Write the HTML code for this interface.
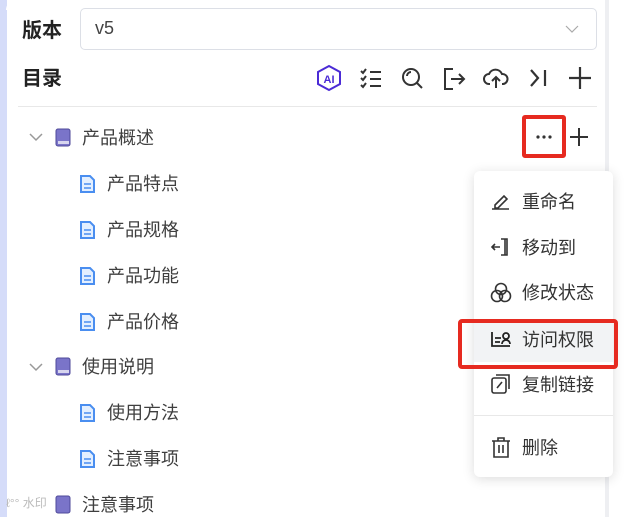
<!DOCTYPE html>
<html><head><meta charset="utf-8"><style>
*{margin:0;padding:0;box-sizing:border-box}
body{width:630px;height:517px;overflow:hidden;background:#fff;font-family:"Liberation Sans","Noto Sans CJK SC",sans-serif;color:#333;position:relative}
.a{position:absolute}
.t{font-size:18px;line-height:24px;color:#3f3f3f;margin-top:1px}
svg{position:absolute;overflow:visible}
.mi{font-size:18px;color:#333;position:absolute;left:522px;line-height:24px}
</style></head><body>
<div class="a" style="left:0;top:0;width:7px;height:517px;background:#d5dcf9"></div>
<div class="a" style="left:6px;top:0;width:10px;height:10px;background:#fff;border-top-left-radius:10px"></div>
<div class="a" style="left:605px;top:0;width:4px;height:517px;background:#eeeff2"></div>

<div class="a" style="left:22px;top:17px;font-size:20px;font-weight:bold;color:#222;line-height:28px">版本</div>
<div class="a" style="left:80px;top:8px;width:517px;height:42px;border:1px solid #dcdfe6;border-radius:5px"></div>
<div class="a" style="left:95px;top:18px;font-size:18px;color:#444">v5</div>
<svg style="left:565px;top:25px" width="14" height="8"><path d="M1 1 L7 7 L13 1" fill="none" stroke="#aaa" stroke-width="1.2"/></svg>

<div class="a" style="left:22px;top:65px;font-size:20px;font-weight:bold;color:#222;line-height:28px">目录</div>
<svg style="left:316px;top:65px" width="26" height="26"><path d="M13 1 L24 7 L24 19 L13 25 L2 19 L2 7 Z" fill="none" stroke="#4b2bd6" stroke-width="2"/><text x="13" y="18" font-size="11" font-weight="bold" text-anchor="middle" fill="#4b2bd6" font-family="Liberation Sans">AI</text></svg>
<svg style="left:360px;top:68px" width="22" height="20" fill="none" stroke="#333" stroke-width="2"><path d="M1 3l2 2 3-4M1 10l2 2 3-4M1 17l2 2 3-4M10 4h11M10 11h11M10 18h11"/></svg>
<svg style="left:401px;top:67px" width="24" height="24" fill="none" stroke="#333" stroke-width="2"><circle cx="10" cy="10" r="8"/><path d="M16 16l5 5M6 9a4 4 0 0 1 4-4"/></svg>
<svg style="left:443px;top:67px" width="24" height="24" fill="none" stroke="#333" stroke-width="2"><path d="M10 2H2v20h8M8 12h13M16 7l5 5-5 5"/></svg>
<svg style="left:483px;top:66px" width="26" height="24" fill="none" stroke="#333" stroke-width="2"><path d="M7 18H6a5 5 0 0 1 0-10 7 7 0 0 1 13 0 5 5 0 0 1 1 10h-1M13 22V11M9 15l4-4 4 4"/></svg>
<svg style="left:529px;top:68px" width="20" height="20" fill="none" stroke="#333" stroke-width="2.2"><path d="M2 2l7 8-7 8M16 2v16"/></svg>
<svg style="left:569px;top:67px" width="22" height="22" fill="none" stroke="#333" stroke-width="2.2"><path d="M11 0v22M0 11h22"/></svg>

<div class="a" style="left:18px;top:106px;width:579px;height:1px;background:#e8e8e8"></div>

<svg style="left:29px;top:133px" width="14" height="8"><path d="M1 1l6 6 6-6" fill="none" stroke="#999" stroke-width="1.5"/></svg>
<svg style="left:55px;top:128px" width="16" height="19"><rect x="1" y="1" width="14" height="17" rx="2" fill="#7a74c9" stroke="#4f4a9a"/><rect x="3" y="13" width="11" height="3" fill="#fff" opacity=".7"/></svg>
<div class="a t" style="left:82px;top:125px">产品概述</div>
<div class="a" style="left:522px;top:115px;width:44px;height:43px;border:4px solid #e62a20;border-radius:3px"></div>
<svg style="left:536px;top:135px" width="16" height="4" fill="#333"><circle cx="2" cy="2" r="1.6"/><circle cx="8" cy="2" r="1.6"/><circle cx="14" cy="2" r="1.6"/></svg>
<svg style="left:570px;top:128px" width="18" height="18" fill="none" stroke="#333" stroke-width="2"><path d="M9 0v18M0 9h18"/></svg>

<svg style="left:80px;top:175px" width="15" height="18"><path d="M1 1h9l4 4v12H1z" fill="#e3efff" stroke="#4a8ef0" stroke-width="2"/><path d="M4 9h7M4 13h7" stroke="#4a8ef0" stroke-width="1.6"/></svg>
<div class="a t" style="left:107px;top:171px">产品特点</div>
<svg style="left:80px;top:221px" width="15" height="18"><path d="M1 1h9l4 4v12H1z" fill="#e3efff" stroke="#4a8ef0" stroke-width="2"/><path d="M4 9h7M4 13h7" stroke="#4a8ef0" stroke-width="1.6"/></svg>
<div class="a t" style="left:107px;top:217px">产品规格</div>
<svg style="left:80px;top:267px" width="15" height="18"><path d="M1 1h9l4 4v12H1z" fill="#e3efff" stroke="#4a8ef0" stroke-width="2"/><path d="M4 9h7M4 13h7" stroke="#4a8ef0" stroke-width="1.6"/></svg>
<div class="a t" style="left:107px;top:263px">产品功能</div>
<svg style="left:80px;top:313px" width="15" height="18"><path d="M1 1h9l4 4v12H1z" fill="#e3efff" stroke="#4a8ef0" stroke-width="2"/><path d="M4 9h7M4 13h7" stroke="#4a8ef0" stroke-width="1.6"/></svg>
<div class="a t" style="left:107px;top:309px">产品价格</div>

<svg style="left:29px;top:363px" width="14" height="8"><path d="M1 1l6 6 6-6" fill="none" stroke="#999" stroke-width="1.5"/></svg>
<svg style="left:55px;top:357px" width="16" height="19"><rect x="1" y="1" width="14" height="17" rx="2" fill="#7a74c9" stroke="#4f4a9a"/><rect x="3" y="13" width="11" height="3" fill="#fff" opacity=".7"/></svg>
<div class="a t" style="left:82px;top:354px">使用说明</div>
<svg style="left:80px;top:404px" width="15" height="18"><path d="M1 1h9l4 4v12H1z" fill="#e3efff" stroke="#4a8ef0" stroke-width="2"/><path d="M4 9h7M4 13h7" stroke="#4a8ef0" stroke-width="1.6"/></svg>
<div class="a t" style="left:107px;top:400px">使用方法</div>
<svg style="left:80px;top:450px" width="15" height="18"><path d="M1 1h9l4 4v12H1z" fill="#e3efff" stroke="#4a8ef0" stroke-width="2"/><path d="M4 9h7M4 13h7" stroke="#4a8ef0" stroke-width="1.6"/></svg>
<div class="a t" style="left:107px;top:446px">注意事项</div>
<svg style="left:55px;top:495px" width="16" height="19"><rect x="1" y="1" width="14" height="17" rx="2" fill="#7a74c9" stroke="#4f4a9a"/></svg>
<div class="a" style="left:6px;top:494px;font-size:12px;color:#bbb">ℓ°° 水印</div>
<div class="a t" style="left:82px;top:492px">注意事项</div>

<div class="a" style="left:474px;top:171px;width:139px;height:306px;background:#fff;border-radius:6px;box-shadow:0 2px 12px rgba(0,0,0,.14)"></div>
<div class="a" style="left:474px;top:322px;width:139px;height:40px;background:#f2f3f5"></div>
<div class="a" style="left:474px;top:415px;width:139px;height:1px;background:#e8e8e8"></div>
<svg style="left:491px;top:192px" width="20" height="18" fill="none" stroke="#333" stroke-width="1.6"><path d="M4 13l9-9 3 3-9 9H4z M1 17h17"/></svg>
<div class="mi" style="top:190px">重命名</div>
<svg style="left:491px;top:237px" width="20" height="20" fill="none" stroke="#333" stroke-width="1.6"><path d="M10 2h6v16h-6M14 2v16M9 10H1M4 7l-3 3 3 3"/></svg>
<div class="mi" style="top:236px">移动到</div>
<svg style="left:490px;top:282px" width="22" height="21" fill="none" stroke="#333" stroke-width="1.6"><circle cx="11" cy="7" r="5.5"/><circle cx="7" cy="14" r="5.5"/><circle cx="15" cy="14" r="5.5"/></svg>
<div class="mi" style="top:281px">修改状态</div>
<svg style="left:490px;top:331px" width="22" height="17" fill="none" stroke="#222" stroke-width="1.8"><path d="M2 1v14h18M5 7h6M5 11h5"/><circle cx="16" cy="5" r="3"/><path d="M12 13a4 4 0 0 1 8 0"/></svg>
<div class="mi" style="top:328px">访问权限</div>
<div class="a" style="left:458px;top:319px;width:160px;height:50px;border:4px solid #e62a20;border-radius:4px"></div>
<svg style="left:491px;top:374px" width="20" height="20" fill="none" stroke="#333" stroke-width="1.6"><rect x="1" y="4" width="14" height="15" rx="2"/><path d="M5 1h13v14"/><path d="M6 14l5-6"/></svg>
<div class="mi" style="top:373px">复制链接</div>
<svg style="left:491px;top:437px" width="20" height="21" fill="none" stroke="#333" stroke-width="1.6"><path d="M1 4h18M7 4V1h6v3M3 4v16h14V4M8 8v8M12 8v8"/></svg>
<div class="mi" style="top:436px">删除</div>
</body></html>
